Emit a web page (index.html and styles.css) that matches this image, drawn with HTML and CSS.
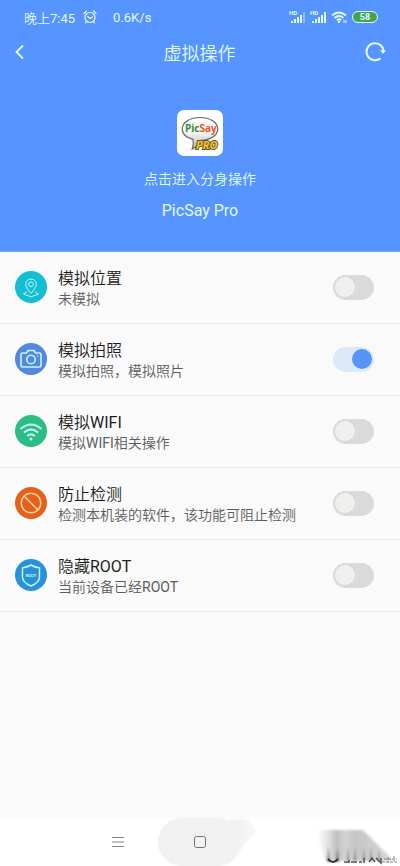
FILE: index.html
```html
<!DOCTYPE html>
<html lang="zh-CN">
<head>
<meta charset="utf-8">
<meta name="viewport" content="width=device-width, initial-scale=1">
<title>虚拟操作</title>
<link rel="stylesheet" href="styles.css">
</head>
<body>
<div class="screen">
  <header class="hero">
    <div class="status">
      <span>晚上7:45</span>
      <svg class="alarm" viewBox="0 0 14 14" width="14" height="14" fill="none" stroke="currentColor" stroke-linecap="round" stroke-width="1.200"><circle cx="7" cy="7.500" r="5"/><path d="M1 3.500 3.500 1M13 3.500 10.500 1M4.800 6.500 7 8.500l2.500-1.500M3.500 11.500l-1 1.500M10.500 11.500l1 1.500"/></svg>
      <span class="speed">0.6K/s</span>
      <span class="signals">
        <svg viewBox="0 0 17 14" width="17" height="14" fill="currentColor"><text class="hd" x="0" y="5">HD</text><path d="M2 11h2v2H2zM5 9h2v4H5zM8 7h2v6H8zM11 5h2v8h-2z"/><path opacity=".4" d="M14 2h2v11h-2z"/></svg>
        <svg viewBox="0 0 17 14" width="17" height="14" fill="currentColor"><text class="hd" x="0" y="5">HD</text><path d="M2 11h2v2H2zM5 9h2v4H5zM8 7h2v6H8zM11 5h2v8h-2zM14 2h2v11h-2z"/></svg>
        <svg viewBox="0 0 17 14" width="17" height="14" fill="none" stroke="currentColor" stroke-width="1.800"><path d="M1 5.500q7-6 14 0M3.500 8q4.500-4 9 0M5.800 10.300q2.200-2 4.400 0"/><path d="M7 11.500h2L8 13zM13 10v3M15 10v3" stroke-width="1"/></svg>
      </span>
      <span class="battery">58</span>
    </div>
    <div class="bar">
      <button class="icon-button" aria-label="返回"><svg viewBox="0 0 22 22" width="22" height="22" fill="none" stroke="currentColor" stroke-width="1.800"><path d="M14 4.500 7.500 11l6.500 6.500"/></svg></button>
      <h1>虚拟操作</h1>
      <button class="icon-button" aria-label="刷新"><svg viewBox="0 0 22 22" width="22" height="22" fill="none" stroke="currentColor" stroke-width="2"><path d="M16.500 17.200A8.500 8.500 0 1 1 19.500 10"/><path d="M16 9.300h6l-2.800 3.700z" fill="currentColor" stroke="none"/></svg></button>
    </div>
    <a class="app" href="#open">
      <svg class="logo" viewBox="0 0 46 46" width="46" height="46">
        <defs><linearGradient id="bubble" x2="0" y2="1"><stop stop-color="#fff"/><stop offset=".5" stop-color="#f2f2f0"/><stop offset="1" stop-color="#b8b8b8"/></linearGradient></defs>
        <rect width="46" height="46" rx="7" fill="#fff"/>
        <path d="M23 7.500c10 0 17.800 5 17.800 11.500S33 30.200 24 30.400c-2 4-5 7-8.800 8.600 1.300-3 1.600-6 .8-9.600C9.500 27.700 5.200 24 5.200 19 5.200 12.500 13 7.500 23 7.500z" fill="url(#bubble)" stroke="#666" stroke-width="1.200"/>
        <text class="logo-name" x="8" y="22"><tspan fill="#318b38">Pic</tspan><tspan fill="#e5562c">Say</tspan></text>
        <text class="logo-pro" x="19" y="39">PRO</text>
      </svg>
      <span class="hint">点击进入分身操作</span>
      <span class="app-name">PicSay Pro</span>
    </a>
  </header>

  <main class="list">
    <label class="row">
      <svg class="badge cyan" viewBox="0 0 32 32" width="32" height="32"><path d="M16 22.500c-2.500-3.500-5.300-6-5.300-9.200a5.300 5.300 0 0 1 10.600 0c0 3.200-2.800 5.700-5.300 9.200z"/><circle cx="16" cy="13.300" r="2.400"/><path d="M12 20.700 8.500 23l7.500 2.800 7.500-2.800-3.500-2.300"/></svg>
      <span class="text"><span class="title">模拟位置</span><span class="sub">未模拟</span></span>
      <input type="checkbox" role="switch">
    </label>
    <label class="row">
      <svg class="badge blue" viewBox="0 0 32 32" width="32" height="32"><path stroke-width="1.600" d="M7.500 10h4l1.500-2.500h6L20.500 10h4q1.500 0 1.500 1.500v11q0 1.500-1.500 1.500h-17Q6 24 6 22.500v-11Q6 10 7.500 10z"/><circle stroke-width="1.600" cx="16" cy="16.500" r="4.300"/><path d="M22 13h1.500"/></svg>
      <span class="text"><span class="title">模拟拍照</span><span class="sub">模拟拍照，模拟照片</span></span>
      <input type="checkbox" role="switch" checked>
    </label>
    <label class="row">
      <svg class="badge green" viewBox="0 0 32 32" width="32" height="32"><path stroke-width="2" d="M5.500 14q10.500-9 21 0M9 17.500q7-6 14 0M12.200 21q3.800-3.200 7.600 0"/><circle cx="16" cy="24" r="1.500" fill="currentColor" stroke="none"/></svg>
      <span class="text"><span class="title">模拟WIFI</span><span class="sub">模拟WIFI相关操作</span></span>
      <input type="checkbox" role="switch">
    </label>
    <label class="row">
      <svg class="badge orange" viewBox="0 0 32 32" width="32" height="32"><circle stroke-width="1.500" cx="16" cy="16" r="9.800"/><path stroke-width="1.500" d="m9 9 14 14"/></svg>
      <span class="text"><span class="title">防止检测</span><span class="sub">检测本机装的软件，该功能可阻止检测</span></span>
      <input type="checkbox" role="switch">
    </label>
    <label class="row">
      <svg class="badge azure" viewBox="0 0 32 32" width="32" height="32"><path stroke-width="1.500" d="M16 6q4 2.500 8.500 2.800V18q0 5.500-8.500 9-8.500-3.500-8.500-9V8.800Q12 8.500 16 6z"/><text class="root" x="16" y="17.500">ROOT</text></svg>
      <span class="text"><span class="title">隐藏ROOT</span><span class="sub">当前设备已经ROOT</span></span>
      <input type="checkbox" role="switch">
    </label>
  </main>

  <nav class="nav">
    <button class="recents" aria-label="最近任务"><svg viewBox="0 0 12 12" width="12" height="12" stroke="#858585"><path d="M0 1.500h12M0 6h12M0 10.500h12"/></svg></button>
    <button class="home" aria-label="主屏幕"><svg viewBox="0 0 12 12" width="12" height="12" fill="none" stroke="#747474"><rect x=".5" y=".5" width="11" height="11" rx="2"/></svg></button>
    <svg class="smudge" viewBox="0 0 180 56" width="180" height="56" aria-hidden="true">
      <defs>
        <linearGradient id="fade"><stop stop-color="#ddd" stop-opacity="0"/><stop offset=".26" stop-color="#c0c0c0"/><stop offset=".38" stop-color="#d4d4d4"/><stop offset=".5" stop-color="#c6c6c6"/><stop offset="1" stop-color="#d8d8d8"/></linearGradient>
        <linearGradient id="dark" x2="0" y2="1"><stop stop-color="#666" stop-opacity="0"/><stop offset="1" stop-color="#444"/></linearGradient>
        <linearGradient id="veil" x2="0" y2="1"><stop stop-color="#fff" stop-opacity="0"/><stop offset=".3" stop-color="#fff"/></linearGradient>
        <linearGradient id="smear"><stop stop-color="#f1f1f1"/><stop offset="1" stop-color="#f6f6f6"/></linearGradient>
        <filter id="soft" x="-10%" y="-10%" width="120%" height="120%"><feGaussianBlur stdDeviation=".8"/></filter>
      </defs>
      <path d="M10 9h17l10 11L16 46H10z" fill="url(#smear)" filter="url(#soft)"/>
      <path d="M20 0h160v56H8l29-36z" fill="url(#veil)" filter="url(#soft)"/>
      <g filter="url(#soft)">
        <path d="M96 20h47l31 31h-69z" fill="url(#fade)"/>
        <path d="M107 36h3v16h-3zM116 36h3v16h-3zM127 38h2v13h-2zM134 38h2v13h-2zM143 38h2v13h-2zM150 38h2v13h-2zM158 41h2v10h-2z" fill="url(#dark)" opacity=".7"/>
      </g>
      <path d="M108 49q5 6 10 0" fill="none" stroke="#333" stroke-width="2"/>
      <path d="M124 52h5M129 50v3M131 52h6M139 52h3M144 48v5M149 52l3-4 3 4M156 48l5 5v-5" fill="none" stroke="#555" stroke-width="1.500"/>
      <path d="M162 52h16M164 49h13M174 46v5M168 47v6" fill="none" stroke="#888" stroke-dasharray="3 1"/>
    </svg>
  </nav>
</div>
</body>
</html>
```
FILE: styles.css
```css
* { box-sizing: border-box; }

body {
  margin: 0;
  background: #fafafa;
  color: #1c1c1c;
  font-family: Roboto, "Noto Sans CJK SC DemiLight", "Noto Sans CJK SC", sans-serif;
}

button {
  border: 0;
  padding: 0;
  background: none;
  color: inherit;
}

svg { display: block; flex: none; }

.screen {
  display: flex;
  flex-direction: column;
  min-height: 100vh;
}

.hero {
  background: #5694ff;
  color: #e2fbff;
  padding-bottom: 28px;
  border-bottom: 1px solid #6ba6fb;
}

.status {
  display: flex;
  align-items: center;
  height: 34px;
  padding: 0 22px 0 24px;
  font-size: 13px;
}

.alarm { margin-left: 8px; }
.speed { margin-left: 16px; }

.signals {
  display: flex;
  gap: 4px;
  margin-left: auto;
}

.hd { font: bold 6px Roboto, sans-serif; }

.battery {
  width: 26px;
  height: 12px;
  margin-left: 4px;
  border: 1px solid currentColor;
  border-radius: 6px;
  background: #43a552;
  font-size: 9px;
  font-weight: 700;
  line-height: 10px;
  text-align: center;
}

.bar {
  display: flex;
  align-items: center;
  justify-content: space-between;
  height: 36px;
  padding: 0 14px 0 9px;
}

.icon-button { width: 22px; height: 22px; }

h1 {
  margin: 0;
  padding-left: 4px;
  font-size: 18px;
  font-weight: 350;
}

.app {
  display: flex;
  flex-direction: column;
  align-items: center;
  padding-top: 40px;
  color: inherit;
  text-decoration: none;
}

.logo-name { font: bold 10px "Open Sans", sans-serif; }

.logo-pro {
  font: italic bold 11px "Open Sans", sans-serif;
  fill: #f5c63a;
  stroke: #6a5314;
  stroke-width: 2px;
  paint-order: stroke;
}

.hint {
  margin-top: 12px;
  font-size: 14px;
  font-weight: 350;
  line-height: 22px;
}

.app-name {
  margin-top: 9px;
  font-size: 16px;
  line-height: 24px;
}

.list { flex: 1; }

.row {
  display: flex;
  align-items: center;
  height: 72px;
  padding: 0 26px 1px 15px;
  border-bottom: 1px solid #ebebeb;
}

.badge {
  border-radius: 50%;
  color: #c9f6fa;
  fill: none;
  stroke: currentColor;
  stroke-linejoin: round;
}

.cyan { background: #13bdd2; }
.blue { background: #5289db; }
.green { background: #2cbd82; }
.orange { background: #e5611a; color: #ffd5a4; }
.azure { background: #2592d9; }

.root {
  font: bold 4px Roboto, sans-serif;
  text-anchor: middle;
  fill: currentColor;
  stroke: none;
}

.text {
  display: flex;
  flex: 1;
  flex-direction: column;
  margin-left: 11px;
  padding-top: 3px;
}

.title {
  font-size: 16px;
  line-height: 21px;
}

.sub {
  color: #5c5c5c;
  font-size: 14px;
  line-height: 20px;
}

input {
  appearance: none;
  display: flex;
  align-items: center;
  flex: none;
  width: 41px;
  height: 25px;
  margin: 0;
  padding: 0 2px;
  border-radius: 13px;
  background: #dadada;
}

input::before {
  content: "";
  width: 20px;
  height: 20px;
  border-radius: 50%;
  background: #efefed;
}

input:checked {
  justify-content: flex-end;
  background: #dce9f9;
}

input:checked::before { background: #5694f8; }

.nav {
  position: relative;
  display: flex;
  justify-content: center;
  height: 48px;
  background: #fff;
}

.nav button {
  display: flex;
  align-items: center;
  justify-content: center;
}

.recents { flex: 1; }
.recents svg { margin-left: 77px; }

.home {
  width: 84px;
  margin-right: 158px;
  border-radius: 24px;
  background: #f1f1f1;
}

.smudge {
  position: absolute;
  right: 0;
  bottom: 0;
}
```
